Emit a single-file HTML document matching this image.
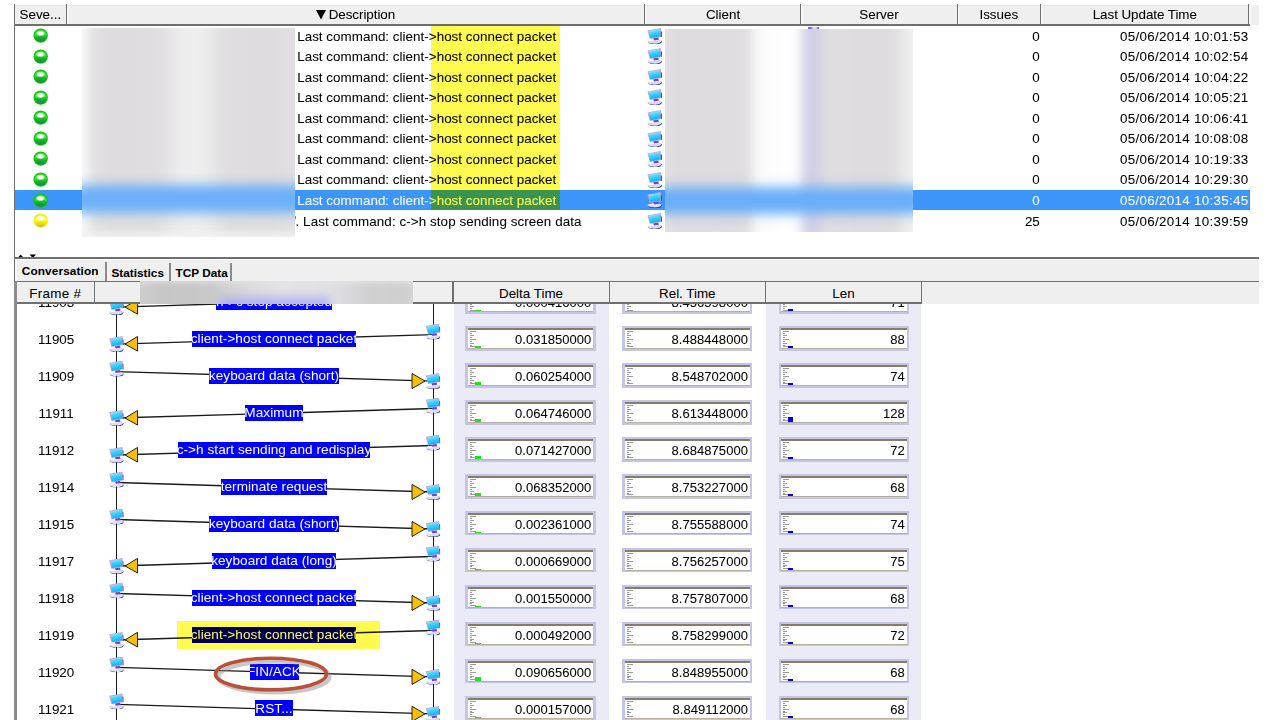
<!DOCTYPE html><html><head><meta charset="utf-8"><style>
html,body{margin:0;padding:0;background:#fff;width:1267px;height:720px;overflow:hidden;position:relative;font-family:"Liberation Sans", sans-serif;}
.a{position:absolute}
.t{position:absolute;white-space:nowrap;line-height:1;font-family:"Liberation Sans", sans-serif;-webkit-text-stroke:0.05px currentColor}
</style></head><body>
<svg width="0" height="0" style="position:absolute">
<defs>
<linearGradient id="gball" x1="0" y1="0" x2="0" y2="1">
<stop offset="0" stop-color="#40d040"/><stop offset="0.4" stop-color="#40d840"/><stop offset="0.62" stop-color="#10b820"/><stop offset="0.85" stop-color="#1c9048"/><stop offset="1" stop-color="#2a7a70"/></linearGradient>
<linearGradient id="yball" x1="0" y1="0" x2="0" y2="1">
<stop offset="0" stop-color="#f0f040"/><stop offset="0.4" stop-color="#ffff40"/><stop offset="0.62" stop-color="#f4ec00"/><stop offset="0.85" stop-color="#e0c830"/><stop offset="1" stop-color="#c09860"/></linearGradient>
<radialGradient id="hl" cx="0.5" cy="0.5" r="0.5">
<stop offset="0" stop-color="#ffffff" stop-opacity="1"/><stop offset="0.55" stop-color="#ffffff" stop-opacity="0.9"/><stop offset="1" stop-color="#ffffff" stop-opacity="0"/></radialGradient>
<linearGradient id="scr" x1="0" y1="0" x2="0.3" y2="1">
<stop offset="0" stop-color="#b8f8ff"/><stop offset="0.45" stop-color="#48d4fc"/><stop offset="1" stop-color="#10b0f8"/></linearGradient>
<symbol id="pc" viewBox="0 0 15 16">
<path d="M0.3,13.2 C1.5,11.2 13,10.6 14.8,12.9 C14.8,15.3 3.5,16.4 0.3,13.2 Z" fill="#dcdaf2"/>
<path d="M1.2,12.8 C3,11.8 9,11.6 11,12.2 C8,13 4,13.4 1.2,12.8 Z" fill="#ffffff"/>
<path d="M0.6,14 C3,15.6 8,15.9 10,15.6 C12.5,15.2 14.2,14.4 14.8,12.6 L15,13.8 C14.4,15.6 11.5,16.2 8.5,16.2 C5,16.2 2,15.6 0.6,14 Z" fill="#30309c"/>
<polygon points="6.2,10.2 11.2,9.3 11.8,11.8 7,12.4" fill="#6848c8"/>
<polygon points="0.5,2.4 13.8,0.1 14.6,8.9 2.8,11" fill="#c8a2d6"/>
<polygon points="13.7,3.2 15,3.8 15,8.9 14.2,9" fill="#5c4878"/>
<polygon points="1.4,3.1 13.1,1.1 13.8,8.3 3.3,10.2" fill="url(#scr)"/>
</symbol>
</defs></svg>

<div class="a" style="left:14.5px;top:4.5px;width:1235px;height:19px;background:#efefef;border-top:1px solid #e4e4e4"></div>
<div class="a" style="left:14.5px;top:24.0px;width:1235.5px;height:1.6px;background:#6f6f6f"></div>
<div class="a" style="left:65.5px;top:4.2px;width:1.4px;height:21px;background:#6f6f6f"></div>
<div class="a" style="left:67.0px;top:5.5px;width:1px;height:18px;background:#fbfbfb"></div>
<div class="a" style="left:643.9px;top:4.2px;width:1.4px;height:21px;background:#6f6f6f"></div>
<div class="a" style="left:645.4px;top:5.5px;width:1px;height:18px;background:#fbfbfb"></div>
<div class="a" style="left:800.0999999999999px;top:4.2px;width:1.4px;height:21px;background:#6f6f6f"></div>
<div class="a" style="left:801.5999999999999px;top:5.5px;width:1px;height:18px;background:#fbfbfb"></div>
<div class="a" style="left:956.5px;top:4.2px;width:1.4px;height:21px;background:#6f6f6f"></div>
<div class="a" style="left:958.0px;top:5.5px;width:1px;height:18px;background:#fbfbfb"></div>
<div class="a" style="left:1039.8999999999999px;top:4.2px;width:1.4px;height:21px;background:#6f6f6f"></div>
<div class="a" style="left:1041.3999999999999px;top:5.5px;width:1px;height:18px;background:#fbfbfb"></div>
<div class="a" style="left:1248.1px;top:4.2px;width:1.4px;height:21px;background:#6f6f6f"></div>
<div class="a" style="left:1249.6px;top:5.5px;width:1px;height:18px;background:#fbfbfb"></div>
<div class="a" style="left:1251.3px;top:4.5px;width:7.5px;height:20.5px;background:#efefef"></div>
<div class="a" style="left:13.8px;top:4.2px;width:1.4px;height:254px;background:#6f6f6f"></div>
<div class="t" style="left:19.5px;top:8.17px;font-size:13.4px;color:#000;">Seve...</div>
<svg class="a" style="left:316px;top:10px" width="10" height="10"><polygon points="0,0 10,0 5,9.5" fill="#000"/></svg>
<div class="t" style="left:328.7px;top:8.17px;font-size:13.4px;color:#000;letter-spacing:-0.05px">Description</div>
<div class="t" style="left:523px;width:400px;top:8.17px;font-size:13.4px;color:#000;text-align:center;">Client</div>
<div class="t" style="left:679px;width:400px;top:8.17px;font-size:13.4px;color:#000;text-align:center;">Server</div>
<div class="t" style="left:798.8px;width:400px;top:8.17px;font-size:13.4px;color:#000;text-align:center;">Issues</div>
<div class="t" style="left:944.8px;width:400px;top:8.17px;font-size:13.4px;color:#000;text-align:center;letter-spacing:-0.05px">Last Update Time</div>
<div class="a" style="left:15.2px;top:189.9px;width:1234.8px;height:20.2px;background:#3c96fa"></div>
<svg class="a" style="left:33.4px;top:28.10px" width="15.4" height="15.2" viewBox="0 0 16 16"><circle cx="8" cy="8" r="7.6" fill="#00cc00"/><ellipse cx="8" cy="8.2" rx="6.6" ry="6.4" fill="url(#gball)"/><ellipse cx="7.8" cy="5.6" rx="5" ry="3.2" fill="url(#hl)"/></svg>
<div class="t" style="left:297.2px;top:29.57px;font-size:13.4px;color:#000;letter-spacing:0.03px">Last command: client-&gt;host connect packet</div>
<svg class="a" style="left:646.9px;top:27.70px" width="15" height="16"><use href="#pc"/></svg>
<div class="t" style="right:227.20000000000005px;top:29.57px;font-size:13.4px;color:#000;text-align:right;">0</div>
<div class="t" style="right:18.40000000000009px;top:29.57px;font-size:13.4px;color:#000;text-align:right;letter-spacing:0.3px">05/06/2014 10:01:53</div>
<svg class="a" style="left:33.4px;top:48.66px" width="15.4" height="15.2" viewBox="0 0 16 16"><circle cx="8" cy="8" r="7.6" fill="#00cc00"/><ellipse cx="8" cy="8.2" rx="6.6" ry="6.4" fill="url(#gball)"/><ellipse cx="7.8" cy="5.6" rx="5" ry="3.2" fill="url(#hl)"/></svg>
<div class="t" style="left:297.2px;top:50.13px;font-size:13.4px;color:#000;letter-spacing:0.03px">Last command: client-&gt;host connect packet</div>
<svg class="a" style="left:646.9px;top:48.26px" width="15" height="16"><use href="#pc"/></svg>
<div class="t" style="right:227.20000000000005px;top:50.13px;font-size:13.4px;color:#000;text-align:right;">0</div>
<div class="t" style="right:18.40000000000009px;top:50.13px;font-size:13.4px;color:#000;text-align:right;letter-spacing:0.3px">05/06/2014 10:02:54</div>
<svg class="a" style="left:33.4px;top:69.22px" width="15.4" height="15.2" viewBox="0 0 16 16"><circle cx="8" cy="8" r="7.6" fill="#00cc00"/><ellipse cx="8" cy="8.2" rx="6.6" ry="6.4" fill="url(#gball)"/><ellipse cx="7.8" cy="5.6" rx="5" ry="3.2" fill="url(#hl)"/></svg>
<div class="t" style="left:297.2px;top:70.69px;font-size:13.4px;color:#000;letter-spacing:0.03px">Last command: client-&gt;host connect packet</div>
<svg class="a" style="left:646.9px;top:68.82px" width="15" height="16"><use href="#pc"/></svg>
<div class="t" style="right:227.20000000000005px;top:70.69px;font-size:13.4px;color:#000;text-align:right;">0</div>
<div class="t" style="right:18.40000000000009px;top:70.69px;font-size:13.4px;color:#000;text-align:right;letter-spacing:0.3px">05/06/2014 10:04:22</div>
<svg class="a" style="left:33.4px;top:89.78px" width="15.4" height="15.2" viewBox="0 0 16 16"><circle cx="8" cy="8" r="7.6" fill="#00cc00"/><ellipse cx="8" cy="8.2" rx="6.6" ry="6.4" fill="url(#gball)"/><ellipse cx="7.8" cy="5.6" rx="5" ry="3.2" fill="url(#hl)"/></svg>
<div class="t" style="left:297.2px;top:91.25px;font-size:13.4px;color:#000;letter-spacing:0.03px">Last command: client-&gt;host connect packet</div>
<svg class="a" style="left:646.9px;top:89.38px" width="15" height="16"><use href="#pc"/></svg>
<div class="t" style="right:227.20000000000005px;top:91.25px;font-size:13.4px;color:#000;text-align:right;">0</div>
<div class="t" style="right:18.40000000000009px;top:91.25px;font-size:13.4px;color:#000;text-align:right;letter-spacing:0.3px">05/06/2014 10:05:21</div>
<svg class="a" style="left:33.4px;top:110.34px" width="15.4" height="15.2" viewBox="0 0 16 16"><circle cx="8" cy="8" r="7.6" fill="#00cc00"/><ellipse cx="8" cy="8.2" rx="6.6" ry="6.4" fill="url(#gball)"/><ellipse cx="7.8" cy="5.6" rx="5" ry="3.2" fill="url(#hl)"/></svg>
<div class="t" style="left:297.2px;top:111.81px;font-size:13.4px;color:#000;letter-spacing:0.03px">Last command: client-&gt;host connect packet</div>
<svg class="a" style="left:646.9px;top:109.94px" width="15" height="16"><use href="#pc"/></svg>
<div class="t" style="right:227.20000000000005px;top:111.81px;font-size:13.4px;color:#000;text-align:right;">0</div>
<div class="t" style="right:18.40000000000009px;top:111.81px;font-size:13.4px;color:#000;text-align:right;letter-spacing:0.3px">05/06/2014 10:06:41</div>
<svg class="a" style="left:33.4px;top:130.90px" width="15.4" height="15.2" viewBox="0 0 16 16"><circle cx="8" cy="8" r="7.6" fill="#00cc00"/><ellipse cx="8" cy="8.2" rx="6.6" ry="6.4" fill="url(#gball)"/><ellipse cx="7.8" cy="5.6" rx="5" ry="3.2" fill="url(#hl)"/></svg>
<div class="t" style="left:297.2px;top:132.37px;font-size:13.4px;color:#000;letter-spacing:0.03px">Last command: client-&gt;host connect packet</div>
<svg class="a" style="left:646.9px;top:130.50px" width="15" height="16"><use href="#pc"/></svg>
<div class="t" style="right:227.20000000000005px;top:132.37px;font-size:13.4px;color:#000;text-align:right;">0</div>
<div class="t" style="right:18.40000000000009px;top:132.37px;font-size:13.4px;color:#000;text-align:right;letter-spacing:0.3px">05/06/2014 10:08:08</div>
<svg class="a" style="left:33.4px;top:151.46px" width="15.4" height="15.2" viewBox="0 0 16 16"><circle cx="8" cy="8" r="7.6" fill="#00cc00"/><ellipse cx="8" cy="8.2" rx="6.6" ry="6.4" fill="url(#gball)"/><ellipse cx="7.8" cy="5.6" rx="5" ry="3.2" fill="url(#hl)"/></svg>
<div class="t" style="left:297.2px;top:152.93px;font-size:13.4px;color:#000;letter-spacing:0.03px">Last command: client-&gt;host connect packet</div>
<svg class="a" style="left:646.9px;top:151.06px" width="15" height="16"><use href="#pc"/></svg>
<div class="t" style="right:227.20000000000005px;top:152.93px;font-size:13.4px;color:#000;text-align:right;">0</div>
<div class="t" style="right:18.40000000000009px;top:152.93px;font-size:13.4px;color:#000;text-align:right;letter-spacing:0.3px">05/06/2014 10:19:33</div>
<svg class="a" style="left:33.4px;top:172.02px" width="15.4" height="15.2" viewBox="0 0 16 16"><circle cx="8" cy="8" r="7.6" fill="#00cc00"/><ellipse cx="8" cy="8.2" rx="6.6" ry="6.4" fill="url(#gball)"/><ellipse cx="7.8" cy="5.6" rx="5" ry="3.2" fill="url(#hl)"/></svg>
<div class="t" style="left:297.2px;top:173.49px;font-size:13.4px;color:#000;letter-spacing:0.03px">Last command: client-&gt;host connect packet</div>
<svg class="a" style="left:646.9px;top:171.62px" width="15" height="16"><use href="#pc"/></svg>
<div class="t" style="right:227.20000000000005px;top:173.49px;font-size:13.4px;color:#000;text-align:right;">0</div>
<div class="t" style="right:18.40000000000009px;top:173.49px;font-size:13.4px;color:#000;text-align:right;letter-spacing:0.3px">05/06/2014 10:29:30</div>
<svg class="a" style="left:33.4px;top:192.58px" width="15.4" height="15.2" viewBox="0 0 16 16"><circle cx="8" cy="8" r="7.6" fill="#00cc00"/><ellipse cx="8" cy="8.2" rx="6.6" ry="6.4" fill="url(#gball)"/><ellipse cx="7.8" cy="5.6" rx="5" ry="3.2" fill="url(#hl)"/></svg>
<div class="t" style="left:297.2px;top:194.05px;font-size:13.4px;color:#fff;letter-spacing:0.03px">Last command: client-&gt;host connect packet</div>
<svg class="a" style="left:646.9px;top:192.18px" width="15" height="16"><use href="#pc"/></svg>
<div class="t" style="right:227.20000000000005px;top:194.05px;font-size:13.4px;color:#fff;text-align:right;">0</div>
<div class="t" style="right:18.40000000000009px;top:194.05px;font-size:13.4px;color:#fff;text-align:right;letter-spacing:0.3px">05/06/2014 10:35:45</div>
<svg class="a" style="left:33.4px;top:213.14px" width="15.4" height="15.2" viewBox="0 0 16 16"><circle cx="8" cy="8" r="7.6" fill="#f0f000"/><ellipse cx="8" cy="8.2" rx="6.6" ry="6.4" fill="url(#yball)"/><ellipse cx="7.8" cy="5.6" rx="5" ry="3.2" fill="url(#hl)"/></svg>
<div class="t" style="left:295.5px;top:214.61px;font-size:13.4px;color:#000;letter-spacing:0.08px">. Last command: c-&gt;h stop sending screen data</div>
<svg class="a" style="left:646.9px;top:212.74px" width="15" height="16"><use href="#pc"/></svg>
<div class="t" style="right:227.20000000000005px;top:214.61px;font-size:13.4px;color:#000;text-align:right;">25</div>
<div class="t" style="right:18.40000000000009px;top:214.61px;font-size:13.4px;color:#000;text-align:right;letter-spacing:0.3px">05/06/2014 10:39:59</div>
<div class="a" style="left:430.7px;top:25px;width:128.9px;height:185px;background:rgb(255,250,80);mix-blend-mode:multiply"></div>
<div class="a" style="left:81.7px;top:28px;width:213px;height:209px;overflow:hidden;background:#fff">
<div class="a" style="left:-10px;top:-10px;width:233px;height:229px;filter:blur(4px);background:
linear-gradient(90deg,#ffffff 0px,#fafafa 10px,#e2e0e2 22px,#dedcde 40px,#dfdddf 85px,#eeedee 110px,#eeeeee 130px,#dfdddf 155px,#dedcde 200px,#e2e0e2 233px)"></div>
<div class="a" style="left:-10px;top:157px;width:233px;height:28px;filter:blur(6px);background:#6ab0f8"></div>
<div class="a" style="left:-10px;top:204px;width:233px;height:30px;filter:blur(4px);background:#f2f2f2"></div>
</div>
<div class="a" style="left:665px;top:29px;width:248px;height:202.5px;overflow:hidden;background:#fff">
<div class="a" style="left:-10px;top:-10px;width:268px;height:222px;filter:blur(4px);background:
linear-gradient(90deg,#e6e4e6 0px,#dedcde 18px,#dfdddf 92px,#fbfbfb 103px,#ffffff 140px,#cfcde4 153px,#d0cee4 159px,#dfdddf 172px,#dedcde 238px,#eeeeee 254px,#f6f6f6 268px)"></div>
<div class="a" style="left:-10px;top:158px;width:268px;height:27px;filter:blur(6px);background:#68aef8"></div>

</div>
<div class="a" style="left:807.5px;top:27.4px;width:11px;height:1.6px;background:linear-gradient(90deg,#6a6ae0 0px,#7a6ad0 3px,#d8d0f8 5px,#e0d8ff 8px,#7070e0 10px)"></div>
<div class="a" style="left:295.2px;top:216.2px;width:1.2px;height:2.6px;background:#6c86c8"></div>
<svg class="a" style="left:17px;top:254px" width="20" height="4"><polygon points="0.5,4 3.7,0.6 6.9,4" fill="#000"/><polygon points="12.6,0.6 19,0.6 15.8,4" fill="#000"/></svg>
<div class="a" style="left:14.5px;top:257.4px;width:1244.5px;height:1.8px;background:#6f6f6f"></div>
<div class="a" style="left:14.5px;top:259.1px;width:1244.5px;height:22.2px;background:#efefef"></div>
<div class="a" style="left:105.4px;top:262px;width:1.3px;height:19px;background:#8a8a8a"></div>
<div class="a" style="left:169.4px;top:263px;width:1.3px;height:18px;background:#8a8a8a"></div>
<div class="a" style="left:230.4px;top:263px;width:1.3px;height:18px;background:#8a8a8a"></div>
<div class="t" style="left:21.8px;top:265.72px;font-size:11.8px;color:#000;font-weight:bold;letter-spacing:0.12px">Conversation</div>
<div class="t" style="left:111.5px;top:267.62px;font-size:11.8px;color:#000;font-weight:bold">Statistics</div>
<div class="t" style="left:175.5px;top:267.62px;font-size:11.8px;color:#000;font-weight:bold">TCP Data</div>
<div class="a" style="left:14.5px;top:280.6px;width:1244.5px;height:1.6px;background:#6f6f6f"></div>
<div class="a" style="left:16.5px;top:282.1px;width:1242.5px;height:21.6px;background:#efefef"></div>
<div class="a" style="left:16.5px;top:302.2px;width:905px;height:1.4px;background:#6f6f6f"></div>
<div class="a" style="left:15.900000000000002px;top:281.5px;width:1.4px;height:22px;background:#6f6f6f"></div>
<div class="a" style="left:93.8px;top:281.5px;width:1.4px;height:22px;background:#6f6f6f"></div>
<div class="a" style="left:452.2px;top:281.5px;width:1.4px;height:22px;background:#6f6f6f"></div>
<div class="a" style="left:608.5px;top:281.5px;width:1.4px;height:22px;background:#6f6f6f"></div>
<div class="a" style="left:764.6999999999999px;top:281.5px;width:1.4px;height:22px;background:#6f6f6f"></div>
<div class="a" style="left:920.8px;top:281.5px;width:1.4px;height:22px;background:#6f6f6f"></div>
<div class="t" style="left:-144.8px;width:400px;top:286.67px;font-size:13.4px;color:#000;text-align:center;letter-spacing:0.3px">Frame #</div>
<div class="t" style="left:331px;width:400px;top:286.67px;font-size:13.4px;color:#000;text-align:center;">Delta Time</div>
<div class="t" style="left:487.29999999999995px;width:400px;top:286.67px;font-size:13.4px;color:#000;text-align:center;">Rel. Time</div>
<div class="t" style="left:643.5px;width:400px;top:286.67px;font-size:13.4px;color:#000;text-align:center;">Len</div>
<div class="a" style="left:14.2px;top:281px;width:3.2px;height:439px;background:#8c8c8c"></div>
<div class="a" style="left:13.8px;top:258px;width:1.4px;height:23px;background:#6f6f6f"></div>
<div class="a" style="left:15.4px;top:259.5px;width:1.2px;height:21.5px;background:#fbfbfb"></div>
<div class="a" style="left:15.4px;top:259.3px;width:1243px;height:1.2px;background:#fbfbfb"></div>
<div class="a" style="left:454.2px;top:303.6px;width:154.6px;height:416.4px;background:#ebebf7"></div>
<div class="a" style="left:766.2px;top:303.6px;width:154.6px;height:416.4px;background:#ebebf7"></div>
<div class="a" style="left:0;top:303.6px;width:1267px;height:416.4px;overflow:hidden">
<div class="a" style="left:116.0px;top:0.00px;width:1.3px;height:420px;background:#1a1a1a"></div>
<div class="a" style="left:432.6px;top:0.00px;width:1.3px;height:420px;background:#1a1a1a"></div>
<div class="t" style="left:-143.9px;width:400px;text-align:center;top:-7.71px;font-size:13.4px;color:#000;letter-spacing:0.0px">11903</div>
<div class="a" style="left:465.4px;top:-14.78px;width:130.4px;height:24.8px;background:#c4c4e4"></div>
<div class="a" style="left:468.0px;top:-12.48px;width:125.2px;height:20.3px;background:#ffffff"></div>
<div class="a" style="left:468.0px;top:-12.48px;width:125.2px;height:2.0px;background:#857d68"></div>
<div class="a" style="left:468.0px;top:7.32px;width:125.2px;height:0.8px;background:#b8b0a0"></div>
<div class="a" style="left:469.9px;top:-9.28px;width:6px;height:0.6px;background:#9a9a9a"></div>
<div class="a" style="left:469.9px;top:-7.38px;width:2px;height:0.6px;background:#9a9a9a"></div>
<div class="a" style="left:469.9px;top:-5.48px;width:4px;height:0.6px;background:#9a9a9a"></div>
<div class="a" style="left:469.9px;top:-3.58px;width:2px;height:0.6px;background:#9a9a9a"></div>
<div class="a" style="left:469.9px;top:-1.68px;width:6px;height:0.6px;background:#9a9a9a"></div>
<div class="a" style="left:469.9px;top:0.22px;width:2px;height:0.6px;background:#9a9a9a"></div>
<div class="a" style="left:469.9px;top:2.12px;width:4px;height:0.6px;background:#9a9a9a"></div>
<div class="a" style="left:469.9px;top:4.02px;width:2px;height:0.6px;background:#9a9a9a"></div>
<div class="a" style="left:469.9px;top:5.92px;width:6px;height:0.6px;background:#9a9a9a"></div>
<div class="a" style="left:475.2px;top:6.41px;width:5.6px;height:1.01248px;background:#20e020"></div>
<div class="t" style="right:675.6px;top:-7.75px;font-size:13px;color:#000;letter-spacing:0.05px">0.000416000</div>
<div class="a" style="left:622px;top:-14.78px;width:130.4px;height:24.8px;background:#c4c4e4"></div>
<div class="a" style="left:624.6px;top:-12.48px;width:125.2px;height:20.3px;background:#ffffff"></div>
<div class="a" style="left:624.6px;top:-12.48px;width:125.2px;height:2.0px;background:#857d68"></div>
<div class="a" style="left:624.6px;top:7.32px;width:125.2px;height:0.8px;background:#b8b0a0"></div>
<div class="a" style="left:626.5px;top:-9.28px;width:6px;height:0.6px;background:#9a9a9a"></div>
<div class="a" style="left:626.5px;top:-7.38px;width:2px;height:0.6px;background:#9a9a9a"></div>
<div class="a" style="left:626.5px;top:-5.48px;width:4px;height:0.6px;background:#9a9a9a"></div>
<div class="a" style="left:626.5px;top:-3.58px;width:2px;height:0.6px;background:#9a9a9a"></div>
<div class="a" style="left:626.5px;top:-1.68px;width:6px;height:0.6px;background:#9a9a9a"></div>
<div class="a" style="left:626.5px;top:0.22px;width:2px;height:0.6px;background:#9a9a9a"></div>
<div class="a" style="left:626.5px;top:2.12px;width:4px;height:0.6px;background:#9a9a9a"></div>
<div class="a" style="left:626.5px;top:4.02px;width:2px;height:0.6px;background:#9a9a9a"></div>
<div class="a" style="left:626.5px;top:5.92px;width:6px;height:0.6px;background:#9a9a9a"></div>
<div class="t" style="right:519px;top:-7.75px;font-size:13px;color:#000;letter-spacing:0.05px">8.456598000</div>
<div class="a" style="left:778.8px;top:-14.78px;width:130.4px;height:24.8px;background:#c4c4e4"></div>
<div class="a" style="left:781.4px;top:-12.48px;width:125.2px;height:20.3px;background:#ffffff"></div>
<div class="a" style="left:781.4px;top:-12.48px;width:125.2px;height:2.0px;background:#857d68"></div>
<div class="a" style="left:781.4px;top:7.32px;width:125.2px;height:0.8px;background:#b8b0a0"></div>
<div class="a" style="left:783.3px;top:-9.28px;width:6px;height:0.6px;background:#9a9a9a"></div>
<div class="a" style="left:783.3px;top:-7.38px;width:2px;height:0.6px;background:#9a9a9a"></div>
<div class="a" style="left:783.3px;top:-5.48px;width:4px;height:0.6px;background:#9a9a9a"></div>
<div class="a" style="left:783.3px;top:-3.58px;width:2px;height:0.6px;background:#9a9a9a"></div>
<div class="a" style="left:783.3px;top:-1.68px;width:6px;height:0.6px;background:#9a9a9a"></div>
<div class="a" style="left:783.3px;top:0.22px;width:2px;height:0.6px;background:#9a9a9a"></div>
<div class="a" style="left:783.3px;top:2.12px;width:4px;height:0.6px;background:#9a9a9a"></div>
<div class="a" style="left:783.3px;top:4.02px;width:2px;height:0.6px;background:#9a9a9a"></div>
<div class="a" style="left:783.3px;top:5.92px;width:6px;height:0.6px;background:#9a9a9a"></div>
<div class="a" style="left:788.0999999999999px;top:5.42px;width:5.2px;height:2.1px;background:#0000f0"></div>
<div class="t" style="right:362.20000000000005px;top:-7.75px;font-size:13px;color:#000;letter-spacing:0.05px">71</div>
<div class="t" style="left:-143.9px;width:400px;text-align:center;top:29.27px;font-size:13.4px;color:#000;letter-spacing:0.0px">11905</div>
<div class="a" style="left:465.4px;top:22.20px;width:130.4px;height:24.8px;background:#c4c4e4"></div>
<div class="a" style="left:468.0px;top:24.50px;width:125.2px;height:20.3px;background:#ffffff"></div>
<div class="a" style="left:468.0px;top:24.50px;width:125.2px;height:2.0px;background:#857d68"></div>
<div class="a" style="left:468.0px;top:44.30px;width:125.2px;height:0.8px;background:#b8b0a0"></div>
<div class="a" style="left:469.9px;top:27.70px;width:6px;height:0.6px;background:#9a9a9a"></div>
<div class="a" style="left:469.9px;top:29.60px;width:2px;height:0.6px;background:#9a9a9a"></div>
<div class="a" style="left:469.9px;top:31.50px;width:4px;height:0.6px;background:#9a9a9a"></div>
<div class="a" style="left:469.9px;top:33.40px;width:2px;height:0.6px;background:#9a9a9a"></div>
<div class="a" style="left:469.9px;top:35.30px;width:6px;height:0.6px;background:#9a9a9a"></div>
<div class="a" style="left:469.9px;top:37.20px;width:2px;height:0.6px;background:#9a9a9a"></div>
<div class="a" style="left:469.9px;top:39.10px;width:4px;height:0.6px;background:#9a9a9a"></div>
<div class="a" style="left:469.9px;top:41.00px;width:2px;height:0.6px;background:#9a9a9a"></div>
<div class="a" style="left:469.9px;top:42.90px;width:6px;height:0.6px;background:#9a9a9a"></div>
<div class="a" style="left:475.2px;top:42.44px;width:5.6px;height:1.9555000000000002px;background:#20e020"></div>
<div class="t" style="right:675.6px;top:29.24px;font-size:13px;color:#000;letter-spacing:0.05px">0.031850000</div>
<div class="a" style="left:622px;top:22.20px;width:130.4px;height:24.8px;background:#c4c4e4"></div>
<div class="a" style="left:624.6px;top:24.50px;width:125.2px;height:20.3px;background:#ffffff"></div>
<div class="a" style="left:624.6px;top:24.50px;width:125.2px;height:2.0px;background:#857d68"></div>
<div class="a" style="left:624.6px;top:44.30px;width:125.2px;height:0.8px;background:#b8b0a0"></div>
<div class="a" style="left:626.5px;top:27.70px;width:6px;height:0.6px;background:#9a9a9a"></div>
<div class="a" style="left:626.5px;top:29.60px;width:2px;height:0.6px;background:#9a9a9a"></div>
<div class="a" style="left:626.5px;top:31.50px;width:4px;height:0.6px;background:#9a9a9a"></div>
<div class="a" style="left:626.5px;top:33.40px;width:2px;height:0.6px;background:#9a9a9a"></div>
<div class="a" style="left:626.5px;top:35.30px;width:6px;height:0.6px;background:#9a9a9a"></div>
<div class="a" style="left:626.5px;top:37.20px;width:2px;height:0.6px;background:#9a9a9a"></div>
<div class="a" style="left:626.5px;top:39.10px;width:4px;height:0.6px;background:#9a9a9a"></div>
<div class="a" style="left:626.5px;top:41.00px;width:2px;height:0.6px;background:#9a9a9a"></div>
<div class="a" style="left:626.5px;top:42.90px;width:6px;height:0.6px;background:#9a9a9a"></div>
<div class="t" style="right:519px;top:29.24px;font-size:13px;color:#000;letter-spacing:0.05px">8.488448000</div>
<div class="a" style="left:778.8px;top:22.20px;width:130.4px;height:24.8px;background:#c4c4e4"></div>
<div class="a" style="left:781.4px;top:24.50px;width:125.2px;height:20.3px;background:#ffffff"></div>
<div class="a" style="left:781.4px;top:24.50px;width:125.2px;height:2.0px;background:#857d68"></div>
<div class="a" style="left:781.4px;top:44.30px;width:125.2px;height:0.8px;background:#b8b0a0"></div>
<div class="a" style="left:783.3px;top:27.70px;width:6px;height:0.6px;background:#9a9a9a"></div>
<div class="a" style="left:783.3px;top:29.60px;width:2px;height:0.6px;background:#9a9a9a"></div>
<div class="a" style="left:783.3px;top:31.50px;width:4px;height:0.6px;background:#9a9a9a"></div>
<div class="a" style="left:783.3px;top:33.40px;width:2px;height:0.6px;background:#9a9a9a"></div>
<div class="a" style="left:783.3px;top:35.30px;width:6px;height:0.6px;background:#9a9a9a"></div>
<div class="a" style="left:783.3px;top:37.20px;width:2px;height:0.6px;background:#9a9a9a"></div>
<div class="a" style="left:783.3px;top:39.10px;width:4px;height:0.6px;background:#9a9a9a"></div>
<div class="a" style="left:783.3px;top:41.00px;width:2px;height:0.6px;background:#9a9a9a"></div>
<div class="a" style="left:783.3px;top:42.90px;width:6px;height:0.6px;background:#9a9a9a"></div>
<div class="a" style="left:788.0999999999999px;top:42.40px;width:5.2px;height:2.1px;background:#0000f0"></div>
<div class="t" style="right:362.20000000000005px;top:29.24px;font-size:13px;color:#000;letter-spacing:0.05px">88</div>
<div class="t" style="left:-143.9px;width:400px;text-align:center;top:66.25px;font-size:13.4px;color:#000;letter-spacing:0.0px">11909</div>
<div class="a" style="left:465.4px;top:59.18px;width:130.4px;height:24.8px;background:#c4c4e4"></div>
<div class="a" style="left:468.0px;top:61.48px;width:125.2px;height:20.3px;background:#ffffff"></div>
<div class="a" style="left:468.0px;top:61.48px;width:125.2px;height:2.0px;background:#857d68"></div>
<div class="a" style="left:468.0px;top:81.28px;width:125.2px;height:0.8px;background:#b8b0a0"></div>
<div class="a" style="left:469.9px;top:64.68px;width:6px;height:0.6px;background:#9a9a9a"></div>
<div class="a" style="left:469.9px;top:66.58px;width:2px;height:0.6px;background:#9a9a9a"></div>
<div class="a" style="left:469.9px;top:68.48px;width:4px;height:0.6px;background:#9a9a9a"></div>
<div class="a" style="left:469.9px;top:70.38px;width:2px;height:0.6px;background:#9a9a9a"></div>
<div class="a" style="left:469.9px;top:72.28px;width:6px;height:0.6px;background:#9a9a9a"></div>
<div class="a" style="left:469.9px;top:74.18px;width:2px;height:0.6px;background:#9a9a9a"></div>
<div class="a" style="left:469.9px;top:76.08px;width:4px;height:0.6px;background:#9a9a9a"></div>
<div class="a" style="left:469.9px;top:77.98px;width:2px;height:0.6px;background:#9a9a9a"></div>
<div class="a" style="left:469.9px;top:79.88px;width:6px;height:0.6px;background:#9a9a9a"></div>
<div class="a" style="left:475.2px;top:78.57px;width:5.6px;height:2.80762px;background:#20e020"></div>
<div class="t" style="right:675.6px;top:66.22px;font-size:13px;color:#000;letter-spacing:0.05px">0.060254000</div>
<div class="a" style="left:622px;top:59.18px;width:130.4px;height:24.8px;background:#c4c4e4"></div>
<div class="a" style="left:624.6px;top:61.48px;width:125.2px;height:20.3px;background:#ffffff"></div>
<div class="a" style="left:624.6px;top:61.48px;width:125.2px;height:2.0px;background:#857d68"></div>
<div class="a" style="left:624.6px;top:81.28px;width:125.2px;height:0.8px;background:#b8b0a0"></div>
<div class="a" style="left:626.5px;top:64.68px;width:6px;height:0.6px;background:#9a9a9a"></div>
<div class="a" style="left:626.5px;top:66.58px;width:2px;height:0.6px;background:#9a9a9a"></div>
<div class="a" style="left:626.5px;top:68.48px;width:4px;height:0.6px;background:#9a9a9a"></div>
<div class="a" style="left:626.5px;top:70.38px;width:2px;height:0.6px;background:#9a9a9a"></div>
<div class="a" style="left:626.5px;top:72.28px;width:6px;height:0.6px;background:#9a9a9a"></div>
<div class="a" style="left:626.5px;top:74.18px;width:2px;height:0.6px;background:#9a9a9a"></div>
<div class="a" style="left:626.5px;top:76.08px;width:4px;height:0.6px;background:#9a9a9a"></div>
<div class="a" style="left:626.5px;top:77.98px;width:2px;height:0.6px;background:#9a9a9a"></div>
<div class="a" style="left:626.5px;top:79.88px;width:6px;height:0.6px;background:#9a9a9a"></div>
<div class="t" style="right:519px;top:66.22px;font-size:13px;color:#000;letter-spacing:0.05px">8.548702000</div>
<div class="a" style="left:778.8px;top:59.18px;width:130.4px;height:24.8px;background:#c4c4e4"></div>
<div class="a" style="left:781.4px;top:61.48px;width:125.2px;height:20.3px;background:#ffffff"></div>
<div class="a" style="left:781.4px;top:61.48px;width:125.2px;height:2.0px;background:#857d68"></div>
<div class="a" style="left:781.4px;top:81.28px;width:125.2px;height:0.8px;background:#b8b0a0"></div>
<div class="a" style="left:783.3px;top:64.68px;width:6px;height:0.6px;background:#9a9a9a"></div>
<div class="a" style="left:783.3px;top:66.58px;width:2px;height:0.6px;background:#9a9a9a"></div>
<div class="a" style="left:783.3px;top:68.48px;width:4px;height:0.6px;background:#9a9a9a"></div>
<div class="a" style="left:783.3px;top:70.38px;width:2px;height:0.6px;background:#9a9a9a"></div>
<div class="a" style="left:783.3px;top:72.28px;width:6px;height:0.6px;background:#9a9a9a"></div>
<div class="a" style="left:783.3px;top:74.18px;width:2px;height:0.6px;background:#9a9a9a"></div>
<div class="a" style="left:783.3px;top:76.08px;width:4px;height:0.6px;background:#9a9a9a"></div>
<div class="a" style="left:783.3px;top:77.98px;width:2px;height:0.6px;background:#9a9a9a"></div>
<div class="a" style="left:783.3px;top:79.88px;width:6px;height:0.6px;background:#9a9a9a"></div>
<div class="a" style="left:788.0999999999999px;top:79.38px;width:5.2px;height:2.1px;background:#0000f0"></div>
<div class="t" style="right:362.20000000000005px;top:66.22px;font-size:13px;color:#000;letter-spacing:0.05px">74</div>
<div class="t" style="left:-143.9px;width:400px;text-align:center;top:103.23px;font-size:13.4px;color:#000;letter-spacing:0.0px">11911</div>
<div class="a" style="left:465.4px;top:96.16px;width:130.4px;height:24.8px;background:#c4c4e4"></div>
<div class="a" style="left:468.0px;top:98.46px;width:125.2px;height:20.3px;background:#ffffff"></div>
<div class="a" style="left:468.0px;top:98.46px;width:125.2px;height:2.0px;background:#857d68"></div>
<div class="a" style="left:468.0px;top:118.26px;width:125.2px;height:0.8px;background:#b8b0a0"></div>
<div class="a" style="left:469.9px;top:101.66px;width:6px;height:0.6px;background:#9a9a9a"></div>
<div class="a" style="left:469.9px;top:103.56px;width:2px;height:0.6px;background:#9a9a9a"></div>
<div class="a" style="left:469.9px;top:105.46px;width:4px;height:0.6px;background:#9a9a9a"></div>
<div class="a" style="left:469.9px;top:107.36px;width:2px;height:0.6px;background:#9a9a9a"></div>
<div class="a" style="left:469.9px;top:109.26px;width:6px;height:0.6px;background:#9a9a9a"></div>
<div class="a" style="left:469.9px;top:111.16px;width:2px;height:0.6px;background:#9a9a9a"></div>
<div class="a" style="left:469.9px;top:113.06px;width:4px;height:0.6px;background:#9a9a9a"></div>
<div class="a" style="left:469.9px;top:114.96px;width:2px;height:0.6px;background:#9a9a9a"></div>
<div class="a" style="left:469.9px;top:116.86px;width:6px;height:0.6px;background:#9a9a9a"></div>
<div class="a" style="left:475.2px;top:115.42px;width:5.6px;height:2.94238px;background:#20e020"></div>
<div class="t" style="right:675.6px;top:103.19px;font-size:13px;color:#000;letter-spacing:0.05px">0.064746000</div>
<div class="a" style="left:622px;top:96.16px;width:130.4px;height:24.8px;background:#c4c4e4"></div>
<div class="a" style="left:624.6px;top:98.46px;width:125.2px;height:20.3px;background:#ffffff"></div>
<div class="a" style="left:624.6px;top:98.46px;width:125.2px;height:2.0px;background:#857d68"></div>
<div class="a" style="left:624.6px;top:118.26px;width:125.2px;height:0.8px;background:#b8b0a0"></div>
<div class="a" style="left:626.5px;top:101.66px;width:6px;height:0.6px;background:#9a9a9a"></div>
<div class="a" style="left:626.5px;top:103.56px;width:2px;height:0.6px;background:#9a9a9a"></div>
<div class="a" style="left:626.5px;top:105.46px;width:4px;height:0.6px;background:#9a9a9a"></div>
<div class="a" style="left:626.5px;top:107.36px;width:2px;height:0.6px;background:#9a9a9a"></div>
<div class="a" style="left:626.5px;top:109.26px;width:6px;height:0.6px;background:#9a9a9a"></div>
<div class="a" style="left:626.5px;top:111.16px;width:2px;height:0.6px;background:#9a9a9a"></div>
<div class="a" style="left:626.5px;top:113.06px;width:4px;height:0.6px;background:#9a9a9a"></div>
<div class="a" style="left:626.5px;top:114.96px;width:2px;height:0.6px;background:#9a9a9a"></div>
<div class="a" style="left:626.5px;top:116.86px;width:6px;height:0.6px;background:#9a9a9a"></div>
<div class="t" style="right:519px;top:103.19px;font-size:13px;color:#000;letter-spacing:0.05px">8.613448000</div>
<div class="a" style="left:778.8px;top:96.16px;width:130.4px;height:24.8px;background:#c4c4e4"></div>
<div class="a" style="left:781.4px;top:98.46px;width:125.2px;height:20.3px;background:#ffffff"></div>
<div class="a" style="left:781.4px;top:98.46px;width:125.2px;height:2.0px;background:#857d68"></div>
<div class="a" style="left:781.4px;top:118.26px;width:125.2px;height:0.8px;background:#b8b0a0"></div>
<div class="a" style="left:783.3px;top:101.66px;width:6px;height:0.6px;background:#9a9a9a"></div>
<div class="a" style="left:783.3px;top:103.56px;width:2px;height:0.6px;background:#9a9a9a"></div>
<div class="a" style="left:783.3px;top:105.46px;width:4px;height:0.6px;background:#9a9a9a"></div>
<div class="a" style="left:783.3px;top:107.36px;width:2px;height:0.6px;background:#9a9a9a"></div>
<div class="a" style="left:783.3px;top:109.26px;width:6px;height:0.6px;background:#9a9a9a"></div>
<div class="a" style="left:783.3px;top:111.16px;width:2px;height:0.6px;background:#9a9a9a"></div>
<div class="a" style="left:783.3px;top:113.06px;width:4px;height:0.6px;background:#9a9a9a"></div>
<div class="a" style="left:783.3px;top:114.96px;width:2px;height:0.6px;background:#9a9a9a"></div>
<div class="a" style="left:783.3px;top:116.86px;width:6px;height:0.6px;background:#9a9a9a"></div>
<div class="a" style="left:788.0999999999999px;top:113.46px;width:5.2px;height:5px;background:#0000f0"></div>
<div class="t" style="right:362.20000000000005px;top:103.19px;font-size:13px;color:#000;letter-spacing:0.05px">128</div>
<div class="t" style="left:-143.9px;width:400px;text-align:center;top:140.21px;font-size:13.4px;color:#000;letter-spacing:0.0px">11912</div>
<div class="a" style="left:465.4px;top:133.14px;width:130.4px;height:24.8px;background:#c4c4e4"></div>
<div class="a" style="left:468.0px;top:135.44px;width:125.2px;height:20.3px;background:#ffffff"></div>
<div class="a" style="left:468.0px;top:135.44px;width:125.2px;height:2.0px;background:#857d68"></div>
<div class="a" style="left:468.0px;top:155.24px;width:125.2px;height:0.8px;background:#b8b0a0"></div>
<div class="a" style="left:469.9px;top:138.64px;width:6px;height:0.6px;background:#9a9a9a"></div>
<div class="a" style="left:469.9px;top:140.54px;width:2px;height:0.6px;background:#9a9a9a"></div>
<div class="a" style="left:469.9px;top:142.44px;width:4px;height:0.6px;background:#9a9a9a"></div>
<div class="a" style="left:469.9px;top:144.34px;width:2px;height:0.6px;background:#9a9a9a"></div>
<div class="a" style="left:469.9px;top:146.24px;width:6px;height:0.6px;background:#9a9a9a"></div>
<div class="a" style="left:469.9px;top:148.14px;width:2px;height:0.6px;background:#9a9a9a"></div>
<div class="a" style="left:469.9px;top:150.04px;width:4px;height:0.6px;background:#9a9a9a"></div>
<div class="a" style="left:469.9px;top:151.94px;width:2px;height:0.6px;background:#9a9a9a"></div>
<div class="a" style="left:469.9px;top:153.84px;width:6px;height:0.6px;background:#9a9a9a"></div>
<div class="a" style="left:475.2px;top:152.20px;width:5.6px;height:3.1428100000000003px;background:#20e020"></div>
<div class="t" style="right:675.6px;top:140.18px;font-size:13px;color:#000;letter-spacing:0.05px">0.071427000</div>
<div class="a" style="left:622px;top:133.14px;width:130.4px;height:24.8px;background:#c4c4e4"></div>
<div class="a" style="left:624.6px;top:135.44px;width:125.2px;height:20.3px;background:#ffffff"></div>
<div class="a" style="left:624.6px;top:135.44px;width:125.2px;height:2.0px;background:#857d68"></div>
<div class="a" style="left:624.6px;top:155.24px;width:125.2px;height:0.8px;background:#b8b0a0"></div>
<div class="a" style="left:626.5px;top:138.64px;width:6px;height:0.6px;background:#9a9a9a"></div>
<div class="a" style="left:626.5px;top:140.54px;width:2px;height:0.6px;background:#9a9a9a"></div>
<div class="a" style="left:626.5px;top:142.44px;width:4px;height:0.6px;background:#9a9a9a"></div>
<div class="a" style="left:626.5px;top:144.34px;width:2px;height:0.6px;background:#9a9a9a"></div>
<div class="a" style="left:626.5px;top:146.24px;width:6px;height:0.6px;background:#9a9a9a"></div>
<div class="a" style="left:626.5px;top:148.14px;width:2px;height:0.6px;background:#9a9a9a"></div>
<div class="a" style="left:626.5px;top:150.04px;width:4px;height:0.6px;background:#9a9a9a"></div>
<div class="a" style="left:626.5px;top:151.94px;width:2px;height:0.6px;background:#9a9a9a"></div>
<div class="a" style="left:626.5px;top:153.84px;width:6px;height:0.6px;background:#9a9a9a"></div>
<div class="t" style="right:519px;top:140.18px;font-size:13px;color:#000;letter-spacing:0.05px">8.684875000</div>
<div class="a" style="left:778.8px;top:133.14px;width:130.4px;height:24.8px;background:#c4c4e4"></div>
<div class="a" style="left:781.4px;top:135.44px;width:125.2px;height:20.3px;background:#ffffff"></div>
<div class="a" style="left:781.4px;top:135.44px;width:125.2px;height:2.0px;background:#857d68"></div>
<div class="a" style="left:781.4px;top:155.24px;width:125.2px;height:0.8px;background:#b8b0a0"></div>
<div class="a" style="left:783.3px;top:138.64px;width:6px;height:0.6px;background:#9a9a9a"></div>
<div class="a" style="left:783.3px;top:140.54px;width:2px;height:0.6px;background:#9a9a9a"></div>
<div class="a" style="left:783.3px;top:142.44px;width:4px;height:0.6px;background:#9a9a9a"></div>
<div class="a" style="left:783.3px;top:144.34px;width:2px;height:0.6px;background:#9a9a9a"></div>
<div class="a" style="left:783.3px;top:146.24px;width:6px;height:0.6px;background:#9a9a9a"></div>
<div class="a" style="left:783.3px;top:148.14px;width:2px;height:0.6px;background:#9a9a9a"></div>
<div class="a" style="left:783.3px;top:150.04px;width:4px;height:0.6px;background:#9a9a9a"></div>
<div class="a" style="left:783.3px;top:151.94px;width:2px;height:0.6px;background:#9a9a9a"></div>
<div class="a" style="left:783.3px;top:153.84px;width:6px;height:0.6px;background:#9a9a9a"></div>
<div class="a" style="left:788.0999999999999px;top:153.34px;width:5.2px;height:2.1px;background:#0000f0"></div>
<div class="t" style="right:362.20000000000005px;top:140.18px;font-size:13px;color:#000;letter-spacing:0.05px">72</div>
<div class="t" style="left:-143.9px;width:400px;text-align:center;top:177.19px;font-size:13.4px;color:#000;letter-spacing:0.0px">11914</div>
<div class="a" style="left:465.4px;top:170.12px;width:130.4px;height:24.8px;background:#c4c4e4"></div>
<div class="a" style="left:468.0px;top:172.42px;width:125.2px;height:20.3px;background:#ffffff"></div>
<div class="a" style="left:468.0px;top:172.42px;width:125.2px;height:2.0px;background:#857d68"></div>
<div class="a" style="left:468.0px;top:192.22px;width:125.2px;height:0.8px;background:#b8b0a0"></div>
<div class="a" style="left:469.9px;top:175.62px;width:6px;height:0.6px;background:#9a9a9a"></div>
<div class="a" style="left:469.9px;top:177.52px;width:2px;height:0.6px;background:#9a9a9a"></div>
<div class="a" style="left:469.9px;top:179.42px;width:4px;height:0.6px;background:#9a9a9a"></div>
<div class="a" style="left:469.9px;top:181.32px;width:2px;height:0.6px;background:#9a9a9a"></div>
<div class="a" style="left:469.9px;top:183.22px;width:6px;height:0.6px;background:#9a9a9a"></div>
<div class="a" style="left:469.9px;top:185.12px;width:2px;height:0.6px;background:#9a9a9a"></div>
<div class="a" style="left:469.9px;top:187.02px;width:4px;height:0.6px;background:#9a9a9a"></div>
<div class="a" style="left:469.9px;top:188.92px;width:2px;height:0.6px;background:#9a9a9a"></div>
<div class="a" style="left:469.9px;top:190.82px;width:6px;height:0.6px;background:#9a9a9a"></div>
<div class="a" style="left:475.2px;top:189.27px;width:5.6px;height:3.05056px;background:#20e020"></div>
<div class="t" style="right:675.6px;top:177.15px;font-size:13px;color:#000;letter-spacing:0.05px">0.068352000</div>
<div class="a" style="left:622px;top:170.12px;width:130.4px;height:24.8px;background:#c4c4e4"></div>
<div class="a" style="left:624.6px;top:172.42px;width:125.2px;height:20.3px;background:#ffffff"></div>
<div class="a" style="left:624.6px;top:172.42px;width:125.2px;height:2.0px;background:#857d68"></div>
<div class="a" style="left:624.6px;top:192.22px;width:125.2px;height:0.8px;background:#b8b0a0"></div>
<div class="a" style="left:626.5px;top:175.62px;width:6px;height:0.6px;background:#9a9a9a"></div>
<div class="a" style="left:626.5px;top:177.52px;width:2px;height:0.6px;background:#9a9a9a"></div>
<div class="a" style="left:626.5px;top:179.42px;width:4px;height:0.6px;background:#9a9a9a"></div>
<div class="a" style="left:626.5px;top:181.32px;width:2px;height:0.6px;background:#9a9a9a"></div>
<div class="a" style="left:626.5px;top:183.22px;width:6px;height:0.6px;background:#9a9a9a"></div>
<div class="a" style="left:626.5px;top:185.12px;width:2px;height:0.6px;background:#9a9a9a"></div>
<div class="a" style="left:626.5px;top:187.02px;width:4px;height:0.6px;background:#9a9a9a"></div>
<div class="a" style="left:626.5px;top:188.92px;width:2px;height:0.6px;background:#9a9a9a"></div>
<div class="a" style="left:626.5px;top:190.82px;width:6px;height:0.6px;background:#9a9a9a"></div>
<div class="t" style="right:519px;top:177.15px;font-size:13px;color:#000;letter-spacing:0.05px">8.753227000</div>
<div class="a" style="left:778.8px;top:170.12px;width:130.4px;height:24.8px;background:#c4c4e4"></div>
<div class="a" style="left:781.4px;top:172.42px;width:125.2px;height:20.3px;background:#ffffff"></div>
<div class="a" style="left:781.4px;top:172.42px;width:125.2px;height:2.0px;background:#857d68"></div>
<div class="a" style="left:781.4px;top:192.22px;width:125.2px;height:0.8px;background:#b8b0a0"></div>
<div class="a" style="left:783.3px;top:175.62px;width:6px;height:0.6px;background:#9a9a9a"></div>
<div class="a" style="left:783.3px;top:177.52px;width:2px;height:0.6px;background:#9a9a9a"></div>
<div class="a" style="left:783.3px;top:179.42px;width:4px;height:0.6px;background:#9a9a9a"></div>
<div class="a" style="left:783.3px;top:181.32px;width:2px;height:0.6px;background:#9a9a9a"></div>
<div class="a" style="left:783.3px;top:183.22px;width:6px;height:0.6px;background:#9a9a9a"></div>
<div class="a" style="left:783.3px;top:185.12px;width:2px;height:0.6px;background:#9a9a9a"></div>
<div class="a" style="left:783.3px;top:187.02px;width:4px;height:0.6px;background:#9a9a9a"></div>
<div class="a" style="left:783.3px;top:188.92px;width:2px;height:0.6px;background:#9a9a9a"></div>
<div class="a" style="left:783.3px;top:190.82px;width:6px;height:0.6px;background:#9a9a9a"></div>
<div class="a" style="left:788.0999999999999px;top:190.32px;width:5.2px;height:2.1px;background:#0000f0"></div>
<div class="t" style="right:362.20000000000005px;top:177.15px;font-size:13px;color:#000;letter-spacing:0.05px">68</div>
<div class="t" style="left:-143.9px;width:400px;text-align:center;top:214.17px;font-size:13.4px;color:#000;letter-spacing:0.0px">11915</div>
<div class="a" style="left:465.4px;top:207.10px;width:130.4px;height:24.8px;background:#c4c4e4"></div>
<div class="a" style="left:468.0px;top:209.40px;width:125.2px;height:20.3px;background:#ffffff"></div>
<div class="a" style="left:468.0px;top:209.40px;width:125.2px;height:2.0px;background:#857d68"></div>
<div class="a" style="left:468.0px;top:229.20px;width:125.2px;height:0.8px;background:#b8b0a0"></div>
<div class="a" style="left:469.9px;top:212.60px;width:6px;height:0.6px;background:#9a9a9a"></div>
<div class="a" style="left:469.9px;top:214.50px;width:2px;height:0.6px;background:#9a9a9a"></div>
<div class="a" style="left:469.9px;top:216.40px;width:4px;height:0.6px;background:#9a9a9a"></div>
<div class="a" style="left:469.9px;top:218.30px;width:2px;height:0.6px;background:#9a9a9a"></div>
<div class="a" style="left:469.9px;top:220.20px;width:6px;height:0.6px;background:#9a9a9a"></div>
<div class="a" style="left:469.9px;top:222.10px;width:2px;height:0.6px;background:#9a9a9a"></div>
<div class="a" style="left:469.9px;top:224.00px;width:4px;height:0.6px;background:#9a9a9a"></div>
<div class="a" style="left:469.9px;top:225.90px;width:2px;height:0.6px;background:#9a9a9a"></div>
<div class="a" style="left:469.9px;top:227.80px;width:6px;height:0.6px;background:#9a9a9a"></div>
<div class="a" style="left:475.2px;top:228.23px;width:5.6px;height:1.07083px;background:#20e020"></div>
<div class="t" style="right:675.6px;top:214.13px;font-size:13px;color:#000;letter-spacing:0.05px">0.002361000</div>
<div class="a" style="left:622px;top:207.10px;width:130.4px;height:24.8px;background:#c4c4e4"></div>
<div class="a" style="left:624.6px;top:209.40px;width:125.2px;height:20.3px;background:#ffffff"></div>
<div class="a" style="left:624.6px;top:209.40px;width:125.2px;height:2.0px;background:#857d68"></div>
<div class="a" style="left:624.6px;top:229.20px;width:125.2px;height:0.8px;background:#b8b0a0"></div>
<div class="a" style="left:626.5px;top:212.60px;width:6px;height:0.6px;background:#9a9a9a"></div>
<div class="a" style="left:626.5px;top:214.50px;width:2px;height:0.6px;background:#9a9a9a"></div>
<div class="a" style="left:626.5px;top:216.40px;width:4px;height:0.6px;background:#9a9a9a"></div>
<div class="a" style="left:626.5px;top:218.30px;width:2px;height:0.6px;background:#9a9a9a"></div>
<div class="a" style="left:626.5px;top:220.20px;width:6px;height:0.6px;background:#9a9a9a"></div>
<div class="a" style="left:626.5px;top:222.10px;width:2px;height:0.6px;background:#9a9a9a"></div>
<div class="a" style="left:626.5px;top:224.00px;width:4px;height:0.6px;background:#9a9a9a"></div>
<div class="a" style="left:626.5px;top:225.90px;width:2px;height:0.6px;background:#9a9a9a"></div>
<div class="a" style="left:626.5px;top:227.80px;width:6px;height:0.6px;background:#9a9a9a"></div>
<div class="t" style="right:519px;top:214.13px;font-size:13px;color:#000;letter-spacing:0.05px">8.755588000</div>
<div class="a" style="left:778.8px;top:207.10px;width:130.4px;height:24.8px;background:#c4c4e4"></div>
<div class="a" style="left:781.4px;top:209.40px;width:125.2px;height:20.3px;background:#ffffff"></div>
<div class="a" style="left:781.4px;top:209.40px;width:125.2px;height:2.0px;background:#857d68"></div>
<div class="a" style="left:781.4px;top:229.20px;width:125.2px;height:0.8px;background:#b8b0a0"></div>
<div class="a" style="left:783.3px;top:212.60px;width:6px;height:0.6px;background:#9a9a9a"></div>
<div class="a" style="left:783.3px;top:214.50px;width:2px;height:0.6px;background:#9a9a9a"></div>
<div class="a" style="left:783.3px;top:216.40px;width:4px;height:0.6px;background:#9a9a9a"></div>
<div class="a" style="left:783.3px;top:218.30px;width:2px;height:0.6px;background:#9a9a9a"></div>
<div class="a" style="left:783.3px;top:220.20px;width:6px;height:0.6px;background:#9a9a9a"></div>
<div class="a" style="left:783.3px;top:222.10px;width:2px;height:0.6px;background:#9a9a9a"></div>
<div class="a" style="left:783.3px;top:224.00px;width:4px;height:0.6px;background:#9a9a9a"></div>
<div class="a" style="left:783.3px;top:225.90px;width:2px;height:0.6px;background:#9a9a9a"></div>
<div class="a" style="left:783.3px;top:227.80px;width:6px;height:0.6px;background:#9a9a9a"></div>
<div class="a" style="left:788.0999999999999px;top:227.30px;width:5.2px;height:2.1px;background:#0000f0"></div>
<div class="t" style="right:362.20000000000005px;top:214.13px;font-size:13px;color:#000;letter-spacing:0.05px">74</div>
<div class="t" style="left:-143.9px;width:400px;text-align:center;top:251.15px;font-size:13.4px;color:#000;letter-spacing:0.0px">11917</div>
<div class="a" style="left:465.4px;top:244.08px;width:130.4px;height:24.8px;background:#c4c4e4"></div>
<div class="a" style="left:468.0px;top:246.38px;width:125.2px;height:20.3px;background:#ffffff"></div>
<div class="a" style="left:468.0px;top:246.38px;width:125.2px;height:2.0px;background:#857d68"></div>
<div class="a" style="left:468.0px;top:266.18px;width:125.2px;height:0.8px;background:#b8b0a0"></div>
<div class="a" style="left:469.9px;top:249.58px;width:6px;height:0.6px;background:#9a9a9a"></div>
<div class="a" style="left:469.9px;top:251.48px;width:2px;height:0.6px;background:#9a9a9a"></div>
<div class="a" style="left:469.9px;top:253.38px;width:4px;height:0.6px;background:#9a9a9a"></div>
<div class="a" style="left:469.9px;top:255.28px;width:2px;height:0.6px;background:#9a9a9a"></div>
<div class="a" style="left:469.9px;top:257.18px;width:6px;height:0.6px;background:#9a9a9a"></div>
<div class="a" style="left:469.9px;top:259.08px;width:2px;height:0.6px;background:#9a9a9a"></div>
<div class="a" style="left:469.9px;top:260.98px;width:4px;height:0.6px;background:#9a9a9a"></div>
<div class="a" style="left:469.9px;top:262.88px;width:2px;height:0.6px;background:#9a9a9a"></div>
<div class="a" style="left:469.9px;top:264.78px;width:6px;height:0.6px;background:#9a9a9a"></div>
<div class="a" style="left:475.2px;top:265.26px;width:5.6px;height:1.02007px;background:#20e020"></div>
<div class="t" style="right:675.6px;top:251.11px;font-size:13px;color:#000;letter-spacing:0.05px">0.000669000</div>
<div class="a" style="left:622px;top:244.08px;width:130.4px;height:24.8px;background:#c4c4e4"></div>
<div class="a" style="left:624.6px;top:246.38px;width:125.2px;height:20.3px;background:#ffffff"></div>
<div class="a" style="left:624.6px;top:246.38px;width:125.2px;height:2.0px;background:#857d68"></div>
<div class="a" style="left:624.6px;top:266.18px;width:125.2px;height:0.8px;background:#b8b0a0"></div>
<div class="a" style="left:626.5px;top:249.58px;width:6px;height:0.6px;background:#9a9a9a"></div>
<div class="a" style="left:626.5px;top:251.48px;width:2px;height:0.6px;background:#9a9a9a"></div>
<div class="a" style="left:626.5px;top:253.38px;width:4px;height:0.6px;background:#9a9a9a"></div>
<div class="a" style="left:626.5px;top:255.28px;width:2px;height:0.6px;background:#9a9a9a"></div>
<div class="a" style="left:626.5px;top:257.18px;width:6px;height:0.6px;background:#9a9a9a"></div>
<div class="a" style="left:626.5px;top:259.08px;width:2px;height:0.6px;background:#9a9a9a"></div>
<div class="a" style="left:626.5px;top:260.98px;width:4px;height:0.6px;background:#9a9a9a"></div>
<div class="a" style="left:626.5px;top:262.88px;width:2px;height:0.6px;background:#9a9a9a"></div>
<div class="a" style="left:626.5px;top:264.78px;width:6px;height:0.6px;background:#9a9a9a"></div>
<div class="t" style="right:519px;top:251.11px;font-size:13px;color:#000;letter-spacing:0.05px">8.756257000</div>
<div class="a" style="left:778.8px;top:244.08px;width:130.4px;height:24.8px;background:#c4c4e4"></div>
<div class="a" style="left:781.4px;top:246.38px;width:125.2px;height:20.3px;background:#ffffff"></div>
<div class="a" style="left:781.4px;top:246.38px;width:125.2px;height:2.0px;background:#857d68"></div>
<div class="a" style="left:781.4px;top:266.18px;width:125.2px;height:0.8px;background:#b8b0a0"></div>
<div class="a" style="left:783.3px;top:249.58px;width:6px;height:0.6px;background:#9a9a9a"></div>
<div class="a" style="left:783.3px;top:251.48px;width:2px;height:0.6px;background:#9a9a9a"></div>
<div class="a" style="left:783.3px;top:253.38px;width:4px;height:0.6px;background:#9a9a9a"></div>
<div class="a" style="left:783.3px;top:255.28px;width:2px;height:0.6px;background:#9a9a9a"></div>
<div class="a" style="left:783.3px;top:257.18px;width:6px;height:0.6px;background:#9a9a9a"></div>
<div class="a" style="left:783.3px;top:259.08px;width:2px;height:0.6px;background:#9a9a9a"></div>
<div class="a" style="left:783.3px;top:260.98px;width:4px;height:0.6px;background:#9a9a9a"></div>
<div class="a" style="left:783.3px;top:262.88px;width:2px;height:0.6px;background:#9a9a9a"></div>
<div class="a" style="left:783.3px;top:264.78px;width:6px;height:0.6px;background:#9a9a9a"></div>
<div class="a" style="left:788.0999999999999px;top:264.28px;width:5.2px;height:2.1px;background:#0000f0"></div>
<div class="t" style="right:362.20000000000005px;top:251.11px;font-size:13px;color:#000;letter-spacing:0.05px">75</div>
<div class="t" style="left:-143.9px;width:400px;text-align:center;top:288.13px;font-size:13.4px;color:#000;letter-spacing:0.0px">11918</div>
<div class="a" style="left:465.4px;top:281.06px;width:130.4px;height:24.8px;background:#c4c4e4"></div>
<div class="a" style="left:468.0px;top:283.36px;width:125.2px;height:20.3px;background:#ffffff"></div>
<div class="a" style="left:468.0px;top:283.36px;width:125.2px;height:2.0px;background:#857d68"></div>
<div class="a" style="left:468.0px;top:303.16px;width:125.2px;height:0.8px;background:#b8b0a0"></div>
<div class="a" style="left:469.9px;top:286.56px;width:6px;height:0.6px;background:#9a9a9a"></div>
<div class="a" style="left:469.9px;top:288.46px;width:2px;height:0.6px;background:#9a9a9a"></div>
<div class="a" style="left:469.9px;top:290.36px;width:4px;height:0.6px;background:#9a9a9a"></div>
<div class="a" style="left:469.9px;top:292.26px;width:2px;height:0.6px;background:#9a9a9a"></div>
<div class="a" style="left:469.9px;top:294.16px;width:6px;height:0.6px;background:#9a9a9a"></div>
<div class="a" style="left:469.9px;top:296.06px;width:2px;height:0.6px;background:#9a9a9a"></div>
<div class="a" style="left:469.9px;top:297.96px;width:4px;height:0.6px;background:#9a9a9a"></div>
<div class="a" style="left:469.9px;top:299.86px;width:2px;height:0.6px;background:#9a9a9a"></div>
<div class="a" style="left:469.9px;top:301.76px;width:6px;height:0.6px;background:#9a9a9a"></div>
<div class="a" style="left:475.2px;top:302.21px;width:5.6px;height:1.0465px;background:#20e020"></div>
<div class="t" style="right:675.6px;top:288.09px;font-size:13px;color:#000;letter-spacing:0.05px">0.001550000</div>
<div class="a" style="left:622px;top:281.06px;width:130.4px;height:24.8px;background:#c4c4e4"></div>
<div class="a" style="left:624.6px;top:283.36px;width:125.2px;height:20.3px;background:#ffffff"></div>
<div class="a" style="left:624.6px;top:283.36px;width:125.2px;height:2.0px;background:#857d68"></div>
<div class="a" style="left:624.6px;top:303.16px;width:125.2px;height:0.8px;background:#b8b0a0"></div>
<div class="a" style="left:626.5px;top:286.56px;width:6px;height:0.6px;background:#9a9a9a"></div>
<div class="a" style="left:626.5px;top:288.46px;width:2px;height:0.6px;background:#9a9a9a"></div>
<div class="a" style="left:626.5px;top:290.36px;width:4px;height:0.6px;background:#9a9a9a"></div>
<div class="a" style="left:626.5px;top:292.26px;width:2px;height:0.6px;background:#9a9a9a"></div>
<div class="a" style="left:626.5px;top:294.16px;width:6px;height:0.6px;background:#9a9a9a"></div>
<div class="a" style="left:626.5px;top:296.06px;width:2px;height:0.6px;background:#9a9a9a"></div>
<div class="a" style="left:626.5px;top:297.96px;width:4px;height:0.6px;background:#9a9a9a"></div>
<div class="a" style="left:626.5px;top:299.86px;width:2px;height:0.6px;background:#9a9a9a"></div>
<div class="a" style="left:626.5px;top:301.76px;width:6px;height:0.6px;background:#9a9a9a"></div>
<div class="t" style="right:519px;top:288.09px;font-size:13px;color:#000;letter-spacing:0.05px">8.757807000</div>
<div class="a" style="left:778.8px;top:281.06px;width:130.4px;height:24.8px;background:#c4c4e4"></div>
<div class="a" style="left:781.4px;top:283.36px;width:125.2px;height:20.3px;background:#ffffff"></div>
<div class="a" style="left:781.4px;top:283.36px;width:125.2px;height:2.0px;background:#857d68"></div>
<div class="a" style="left:781.4px;top:303.16px;width:125.2px;height:0.8px;background:#b8b0a0"></div>
<div class="a" style="left:783.3px;top:286.56px;width:6px;height:0.6px;background:#9a9a9a"></div>
<div class="a" style="left:783.3px;top:288.46px;width:2px;height:0.6px;background:#9a9a9a"></div>
<div class="a" style="left:783.3px;top:290.36px;width:4px;height:0.6px;background:#9a9a9a"></div>
<div class="a" style="left:783.3px;top:292.26px;width:2px;height:0.6px;background:#9a9a9a"></div>
<div class="a" style="left:783.3px;top:294.16px;width:6px;height:0.6px;background:#9a9a9a"></div>
<div class="a" style="left:783.3px;top:296.06px;width:2px;height:0.6px;background:#9a9a9a"></div>
<div class="a" style="left:783.3px;top:297.96px;width:4px;height:0.6px;background:#9a9a9a"></div>
<div class="a" style="left:783.3px;top:299.86px;width:2px;height:0.6px;background:#9a9a9a"></div>
<div class="a" style="left:783.3px;top:301.76px;width:6px;height:0.6px;background:#9a9a9a"></div>
<div class="a" style="left:788.0999999999999px;top:301.26px;width:5.2px;height:2.1px;background:#0000f0"></div>
<div class="t" style="right:362.20000000000005px;top:288.09px;font-size:13px;color:#000;letter-spacing:0.05px">68</div>
<div class="t" style="left:-143.9px;width:400px;text-align:center;top:325.11px;font-size:13.4px;color:#000;letter-spacing:0.0px">11919</div>
<div class="a" style="left:465.4px;top:318.04px;width:130.4px;height:24.8px;background:#c4c4e4"></div>
<div class="a" style="left:468.0px;top:320.34px;width:125.2px;height:20.3px;background:#ffffff"></div>
<div class="a" style="left:468.0px;top:320.34px;width:125.2px;height:2.0px;background:#857d68"></div>
<div class="a" style="left:468.0px;top:340.14px;width:125.2px;height:0.8px;background:#b8b0a0"></div>
<div class="a" style="left:469.9px;top:323.54px;width:6px;height:0.6px;background:#9a9a9a"></div>
<div class="a" style="left:469.9px;top:325.44px;width:2px;height:0.6px;background:#9a9a9a"></div>
<div class="a" style="left:469.9px;top:327.34px;width:4px;height:0.6px;background:#9a9a9a"></div>
<div class="a" style="left:469.9px;top:329.24px;width:2px;height:0.6px;background:#9a9a9a"></div>
<div class="a" style="left:469.9px;top:331.14px;width:6px;height:0.6px;background:#9a9a9a"></div>
<div class="a" style="left:469.9px;top:333.04px;width:2px;height:0.6px;background:#9a9a9a"></div>
<div class="a" style="left:469.9px;top:334.94px;width:4px;height:0.6px;background:#9a9a9a"></div>
<div class="a" style="left:469.9px;top:336.84px;width:2px;height:0.6px;background:#9a9a9a"></div>
<div class="a" style="left:469.9px;top:338.74px;width:6px;height:0.6px;background:#9a9a9a"></div>
<div class="a" style="left:475.2px;top:339.23px;width:5.6px;height:1.01476px;background:#20e020"></div>
<div class="t" style="right:675.6px;top:325.07px;font-size:13px;color:#000;letter-spacing:0.05px">0.000492000</div>
<div class="a" style="left:622px;top:318.04px;width:130.4px;height:24.8px;background:#c4c4e4"></div>
<div class="a" style="left:624.6px;top:320.34px;width:125.2px;height:20.3px;background:#ffffff"></div>
<div class="a" style="left:624.6px;top:320.34px;width:125.2px;height:2.0px;background:#857d68"></div>
<div class="a" style="left:624.6px;top:340.14px;width:125.2px;height:0.8px;background:#b8b0a0"></div>
<div class="a" style="left:626.5px;top:323.54px;width:6px;height:0.6px;background:#9a9a9a"></div>
<div class="a" style="left:626.5px;top:325.44px;width:2px;height:0.6px;background:#9a9a9a"></div>
<div class="a" style="left:626.5px;top:327.34px;width:4px;height:0.6px;background:#9a9a9a"></div>
<div class="a" style="left:626.5px;top:329.24px;width:2px;height:0.6px;background:#9a9a9a"></div>
<div class="a" style="left:626.5px;top:331.14px;width:6px;height:0.6px;background:#9a9a9a"></div>
<div class="a" style="left:626.5px;top:333.04px;width:2px;height:0.6px;background:#9a9a9a"></div>
<div class="a" style="left:626.5px;top:334.94px;width:4px;height:0.6px;background:#9a9a9a"></div>
<div class="a" style="left:626.5px;top:336.84px;width:2px;height:0.6px;background:#9a9a9a"></div>
<div class="a" style="left:626.5px;top:338.74px;width:6px;height:0.6px;background:#9a9a9a"></div>
<div class="t" style="right:519px;top:325.07px;font-size:13px;color:#000;letter-spacing:0.05px">8.758299000</div>
<div class="a" style="left:778.8px;top:318.04px;width:130.4px;height:24.8px;background:#c4c4e4"></div>
<div class="a" style="left:781.4px;top:320.34px;width:125.2px;height:20.3px;background:#ffffff"></div>
<div class="a" style="left:781.4px;top:320.34px;width:125.2px;height:2.0px;background:#857d68"></div>
<div class="a" style="left:781.4px;top:340.14px;width:125.2px;height:0.8px;background:#b8b0a0"></div>
<div class="a" style="left:783.3px;top:323.54px;width:6px;height:0.6px;background:#9a9a9a"></div>
<div class="a" style="left:783.3px;top:325.44px;width:2px;height:0.6px;background:#9a9a9a"></div>
<div class="a" style="left:783.3px;top:327.34px;width:4px;height:0.6px;background:#9a9a9a"></div>
<div class="a" style="left:783.3px;top:329.24px;width:2px;height:0.6px;background:#9a9a9a"></div>
<div class="a" style="left:783.3px;top:331.14px;width:6px;height:0.6px;background:#9a9a9a"></div>
<div class="a" style="left:783.3px;top:333.04px;width:2px;height:0.6px;background:#9a9a9a"></div>
<div class="a" style="left:783.3px;top:334.94px;width:4px;height:0.6px;background:#9a9a9a"></div>
<div class="a" style="left:783.3px;top:336.84px;width:2px;height:0.6px;background:#9a9a9a"></div>
<div class="a" style="left:783.3px;top:338.74px;width:6px;height:0.6px;background:#9a9a9a"></div>
<div class="a" style="left:788.0999999999999px;top:338.24px;width:5.2px;height:2.1px;background:#0000f0"></div>
<div class="t" style="right:362.20000000000005px;top:325.07px;font-size:13px;color:#000;letter-spacing:0.05px">72</div>
<div class="t" style="left:-143.9px;width:400px;text-align:center;top:362.09px;font-size:13.4px;color:#000;letter-spacing:0.0px">11920</div>
<div class="a" style="left:465.4px;top:355.02px;width:130.4px;height:24.8px;background:#c4c4e4"></div>
<div class="a" style="left:468.0px;top:357.32px;width:125.2px;height:20.3px;background:#ffffff"></div>
<div class="a" style="left:468.0px;top:357.32px;width:125.2px;height:2.0px;background:#857d68"></div>
<div class="a" style="left:468.0px;top:377.12px;width:125.2px;height:0.8px;background:#b8b0a0"></div>
<div class="a" style="left:469.9px;top:360.52px;width:6px;height:0.6px;background:#9a9a9a"></div>
<div class="a" style="left:469.9px;top:362.42px;width:2px;height:0.6px;background:#9a9a9a"></div>
<div class="a" style="left:469.9px;top:364.32px;width:4px;height:0.6px;background:#9a9a9a"></div>
<div class="a" style="left:469.9px;top:366.22px;width:2px;height:0.6px;background:#9a9a9a"></div>
<div class="a" style="left:469.9px;top:368.12px;width:6px;height:0.6px;background:#9a9a9a"></div>
<div class="a" style="left:469.9px;top:370.02px;width:2px;height:0.6px;background:#9a9a9a"></div>
<div class="a" style="left:469.9px;top:371.92px;width:4px;height:0.6px;background:#9a9a9a"></div>
<div class="a" style="left:469.9px;top:373.82px;width:2px;height:0.6px;background:#9a9a9a"></div>
<div class="a" style="left:469.9px;top:375.72px;width:6px;height:0.6px;background:#9a9a9a"></div>
<div class="a" style="left:475.2px;top:373.50px;width:5.6px;height:3.71968px;background:#20e020"></div>
<div class="t" style="right:675.6px;top:362.05px;font-size:13px;color:#000;letter-spacing:0.05px">0.090656000</div>
<div class="a" style="left:622px;top:355.02px;width:130.4px;height:24.8px;background:#c4c4e4"></div>
<div class="a" style="left:624.6px;top:357.32px;width:125.2px;height:20.3px;background:#ffffff"></div>
<div class="a" style="left:624.6px;top:357.32px;width:125.2px;height:2.0px;background:#857d68"></div>
<div class="a" style="left:624.6px;top:377.12px;width:125.2px;height:0.8px;background:#b8b0a0"></div>
<div class="a" style="left:626.5px;top:360.52px;width:6px;height:0.6px;background:#9a9a9a"></div>
<div class="a" style="left:626.5px;top:362.42px;width:2px;height:0.6px;background:#9a9a9a"></div>
<div class="a" style="left:626.5px;top:364.32px;width:4px;height:0.6px;background:#9a9a9a"></div>
<div class="a" style="left:626.5px;top:366.22px;width:2px;height:0.6px;background:#9a9a9a"></div>
<div class="a" style="left:626.5px;top:368.12px;width:6px;height:0.6px;background:#9a9a9a"></div>
<div class="a" style="left:626.5px;top:370.02px;width:2px;height:0.6px;background:#9a9a9a"></div>
<div class="a" style="left:626.5px;top:371.92px;width:4px;height:0.6px;background:#9a9a9a"></div>
<div class="a" style="left:626.5px;top:373.82px;width:2px;height:0.6px;background:#9a9a9a"></div>
<div class="a" style="left:626.5px;top:375.72px;width:6px;height:0.6px;background:#9a9a9a"></div>
<div class="t" style="right:519px;top:362.05px;font-size:13px;color:#000;letter-spacing:0.05px">8.848955000</div>
<div class="a" style="left:778.8px;top:355.02px;width:130.4px;height:24.8px;background:#c4c4e4"></div>
<div class="a" style="left:781.4px;top:357.32px;width:125.2px;height:20.3px;background:#ffffff"></div>
<div class="a" style="left:781.4px;top:357.32px;width:125.2px;height:2.0px;background:#857d68"></div>
<div class="a" style="left:781.4px;top:377.12px;width:125.2px;height:0.8px;background:#b8b0a0"></div>
<div class="a" style="left:783.3px;top:360.52px;width:6px;height:0.6px;background:#9a9a9a"></div>
<div class="a" style="left:783.3px;top:362.42px;width:2px;height:0.6px;background:#9a9a9a"></div>
<div class="a" style="left:783.3px;top:364.32px;width:4px;height:0.6px;background:#9a9a9a"></div>
<div class="a" style="left:783.3px;top:366.22px;width:2px;height:0.6px;background:#9a9a9a"></div>
<div class="a" style="left:783.3px;top:368.12px;width:6px;height:0.6px;background:#9a9a9a"></div>
<div class="a" style="left:783.3px;top:370.02px;width:2px;height:0.6px;background:#9a9a9a"></div>
<div class="a" style="left:783.3px;top:371.92px;width:4px;height:0.6px;background:#9a9a9a"></div>
<div class="a" style="left:783.3px;top:373.82px;width:2px;height:0.6px;background:#9a9a9a"></div>
<div class="a" style="left:783.3px;top:375.72px;width:6px;height:0.6px;background:#9a9a9a"></div>
<div class="a" style="left:788.0999999999999px;top:375.22px;width:5.2px;height:2.1px;background:#0000f0"></div>
<div class="t" style="right:362.20000000000005px;top:362.05px;font-size:13px;color:#000;letter-spacing:0.05px">68</div>
<div class="t" style="left:-143.9px;width:400px;text-align:center;top:399.07px;font-size:13.4px;color:#000;letter-spacing:0.0px">11921</div>
<div class="a" style="left:465.4px;top:392.00px;width:130.4px;height:24.8px;background:#c4c4e4"></div>
<div class="a" style="left:468.0px;top:394.30px;width:125.2px;height:20.3px;background:#ffffff"></div>
<div class="a" style="left:468.0px;top:394.30px;width:125.2px;height:2.0px;background:#857d68"></div>
<div class="a" style="left:468.0px;top:414.10px;width:125.2px;height:0.8px;background:#b8b0a0"></div>
<div class="a" style="left:469.9px;top:397.50px;width:6px;height:0.6px;background:#9a9a9a"></div>
<div class="a" style="left:469.9px;top:399.40px;width:2px;height:0.6px;background:#9a9a9a"></div>
<div class="a" style="left:469.9px;top:401.30px;width:4px;height:0.6px;background:#9a9a9a"></div>
<div class="a" style="left:469.9px;top:403.20px;width:2px;height:0.6px;background:#9a9a9a"></div>
<div class="a" style="left:469.9px;top:405.10px;width:6px;height:0.6px;background:#9a9a9a"></div>
<div class="a" style="left:469.9px;top:407.00px;width:2px;height:0.6px;background:#9a9a9a"></div>
<div class="a" style="left:469.9px;top:408.90px;width:4px;height:0.6px;background:#9a9a9a"></div>
<div class="a" style="left:469.9px;top:410.80px;width:2px;height:0.6px;background:#9a9a9a"></div>
<div class="a" style="left:469.9px;top:412.70px;width:6px;height:0.6px;background:#9a9a9a"></div>
<div class="a" style="left:475.2px;top:413.20px;width:5.6px;height:1.00471px;background:#20e020"></div>
<div class="t" style="right:675.6px;top:399.03px;font-size:13px;color:#000;letter-spacing:0.05px">0.000157000</div>
<div class="a" style="left:622px;top:392.00px;width:130.4px;height:24.8px;background:#c4c4e4"></div>
<div class="a" style="left:624.6px;top:394.30px;width:125.2px;height:20.3px;background:#ffffff"></div>
<div class="a" style="left:624.6px;top:394.30px;width:125.2px;height:2.0px;background:#857d68"></div>
<div class="a" style="left:624.6px;top:414.10px;width:125.2px;height:0.8px;background:#b8b0a0"></div>
<div class="a" style="left:626.5px;top:397.50px;width:6px;height:0.6px;background:#9a9a9a"></div>
<div class="a" style="left:626.5px;top:399.40px;width:2px;height:0.6px;background:#9a9a9a"></div>
<div class="a" style="left:626.5px;top:401.30px;width:4px;height:0.6px;background:#9a9a9a"></div>
<div class="a" style="left:626.5px;top:403.20px;width:2px;height:0.6px;background:#9a9a9a"></div>
<div class="a" style="left:626.5px;top:405.10px;width:6px;height:0.6px;background:#9a9a9a"></div>
<div class="a" style="left:626.5px;top:407.00px;width:2px;height:0.6px;background:#9a9a9a"></div>
<div class="a" style="left:626.5px;top:408.90px;width:4px;height:0.6px;background:#9a9a9a"></div>
<div class="a" style="left:626.5px;top:410.80px;width:2px;height:0.6px;background:#9a9a9a"></div>
<div class="a" style="left:626.5px;top:412.70px;width:6px;height:0.6px;background:#9a9a9a"></div>
<div class="t" style="right:519px;top:399.03px;font-size:13px;color:#000;letter-spacing:0.05px">8.849112000</div>
<div class="a" style="left:778.8px;top:392.00px;width:130.4px;height:24.8px;background:#c4c4e4"></div>
<div class="a" style="left:781.4px;top:394.30px;width:125.2px;height:20.3px;background:#ffffff"></div>
<div class="a" style="left:781.4px;top:394.30px;width:125.2px;height:2.0px;background:#857d68"></div>
<div class="a" style="left:781.4px;top:414.10px;width:125.2px;height:0.8px;background:#b8b0a0"></div>
<div class="a" style="left:783.3px;top:397.50px;width:6px;height:0.6px;background:#9a9a9a"></div>
<div class="a" style="left:783.3px;top:399.40px;width:2px;height:0.6px;background:#9a9a9a"></div>
<div class="a" style="left:783.3px;top:401.30px;width:4px;height:0.6px;background:#9a9a9a"></div>
<div class="a" style="left:783.3px;top:403.20px;width:2px;height:0.6px;background:#9a9a9a"></div>
<div class="a" style="left:783.3px;top:405.10px;width:6px;height:0.6px;background:#9a9a9a"></div>
<div class="a" style="left:783.3px;top:407.00px;width:2px;height:0.6px;background:#9a9a9a"></div>
<div class="a" style="left:783.3px;top:408.90px;width:4px;height:0.6px;background:#9a9a9a"></div>
<div class="a" style="left:783.3px;top:410.80px;width:2px;height:0.6px;background:#9a9a9a"></div>
<div class="a" style="left:783.3px;top:412.70px;width:6px;height:0.6px;background:#9a9a9a"></div>
<div class="a" style="left:788.0999999999999px;top:412.20px;width:5.2px;height:2.1px;background:#0000f0"></div>
<div class="t" style="right:362.20000000000005px;top:399.03px;font-size:13px;color:#000;letter-spacing:0.05px">68</div>
<svg class="a" style="left:0;top:0" width="1267" height="420"><line x1="433.1" y1="-6.38" x2="116.5" y2="3.12" stroke="#1a1a1a" stroke-width="1.4"/><polygon points="125.1,3.12 137.5,-4.48 137.5,10.12" fill="#f8c000" stroke="#202020" stroke-width="1"/><use href="#pc" x="425.3" y="-17.48" width="15" height="16"/><use href="#pc" x="108.7" y="-4.98" width="15" height="16"/><line x1="433.1" y1="30.60" x2="116.5" y2="40.10" stroke="#1a1a1a" stroke-width="1.4"/><polygon points="125.1,40.10 137.5,32.50 137.5,47.10" fill="#f8c000" stroke="#202020" stroke-width="1"/><use href="#pc" x="425.3" y="19.50" width="15" height="16"/><use href="#pc" x="108.7" y="32.00" width="15" height="16"/><line x1="116.5" y1="67.58" x2="433.1" y2="77.08" stroke="#1a1a1a" stroke-width="1.4"/><polygon points="425.0,77.08 412.0,69.48 412.0,84.58" fill="#f8c000" stroke="#202020" stroke-width="1"/><use href="#pc" x="108.7" y="56.48" width="15" height="16"/><use href="#pc" x="425.3" y="68.98" width="15" height="16"/><line x1="433.1" y1="104.56" x2="116.5" y2="114.06" stroke="#1a1a1a" stroke-width="1.4"/><polygon points="125.1,114.06 137.5,106.46 137.5,121.06" fill="#f8c000" stroke="#202020" stroke-width="1"/><use href="#pc" x="425.3" y="93.46" width="15" height="16"/><use href="#pc" x="108.7" y="105.96" width="15" height="16"/><line x1="433.1" y1="141.54" x2="116.5" y2="151.04" stroke="#1a1a1a" stroke-width="1.4"/><polygon points="125.1,151.04 137.5,143.44 137.5,158.04" fill="#f8c000" stroke="#202020" stroke-width="1"/><use href="#pc" x="425.3" y="130.44" width="15" height="16"/><use href="#pc" x="108.7" y="142.94" width="15" height="16"/><line x1="116.5" y1="178.52" x2="433.1" y2="188.02" stroke="#1a1a1a" stroke-width="1.4"/><polygon points="425.0,188.02 412.0,180.42 412.0,195.52" fill="#f8c000" stroke="#202020" stroke-width="1"/><use href="#pc" x="108.7" y="167.42" width="15" height="16"/><use href="#pc" x="425.3" y="179.92" width="15" height="16"/><line x1="116.5" y1="215.50" x2="433.1" y2="225.00" stroke="#1a1a1a" stroke-width="1.4"/><polygon points="425.0,225.00 412.0,217.40 412.0,232.50" fill="#f8c000" stroke="#202020" stroke-width="1"/><use href="#pc" x="108.7" y="204.40" width="15" height="16"/><use href="#pc" x="425.3" y="216.90" width="15" height="16"/><line x1="433.1" y1="252.48" x2="116.5" y2="261.98" stroke="#1a1a1a" stroke-width="1.4"/><polygon points="125.1,261.98 137.5,254.38 137.5,268.98" fill="#f8c000" stroke="#202020" stroke-width="1"/><use href="#pc" x="425.3" y="241.38" width="15" height="16"/><use href="#pc" x="108.7" y="253.88" width="15" height="16"/><line x1="116.5" y1="289.46" x2="433.1" y2="298.96" stroke="#1a1a1a" stroke-width="1.4"/><polygon points="425.0,298.96 412.0,291.36 412.0,306.46" fill="#f8c000" stroke="#202020" stroke-width="1"/><use href="#pc" x="108.7" y="278.36" width="15" height="16"/><use href="#pc" x="425.3" y="290.86" width="15" height="16"/><line x1="433.1" y1="326.44" x2="116.5" y2="335.94" stroke="#1a1a1a" stroke-width="1.4"/><polygon points="125.1,335.94 137.5,328.34 137.5,342.94" fill="#f8c000" stroke="#202020" stroke-width="1"/><use href="#pc" x="425.3" y="315.34" width="15" height="16"/><use href="#pc" x="108.7" y="327.84" width="15" height="16"/><line x1="116.5" y1="363.42" x2="433.1" y2="372.92" stroke="#1a1a1a" stroke-width="1.4"/><polygon points="425.0,372.92 412.0,365.32 412.0,380.42" fill="#f8c000" stroke="#202020" stroke-width="1"/><use href="#pc" x="108.7" y="352.32" width="15" height="16"/><use href="#pc" x="425.3" y="364.82" width="15" height="16"/><line x1="116.5" y1="400.40" x2="433.1" y2="409.90" stroke="#1a1a1a" stroke-width="1.4"/><polygon points="425.0,409.90 412.0,402.30 412.0,417.40" fill="#f8c000" stroke="#202020" stroke-width="1"/><use href="#pc" x="108.7" y="389.30" width="15" height="16"/><use href="#pc" x="425.3" y="401.80" width="15" height="16"/></svg>
<div class="a" style="left:216.40px;top:-9.88px;width:115.2px;height:16px;background:#0000ff;overflow:hidden"><div class="t" style="left:-50px;width:215.2px;text-align:center;top:1.3px;font-size:13.6px;color:#ffffff;letter-spacing:0.05px;-webkit-text-stroke:0">h-&gt;c stop accepted</div></div>
<div class="a" style="left:191.90px;top:27.10px;width:164.2px;height:16px;background:#0000ff;overflow:hidden"><div class="t" style="left:-50px;width:264.2px;text-align:center;top:1.3px;font-size:13.6px;color:#ffffff;letter-spacing:0.05px;-webkit-text-stroke:0">client-&gt;host connect packet</div></div>
<div class="a" style="left:209.40px;top:64.08px;width:129.2px;height:16px;background:#0000ff;overflow:hidden"><div class="t" style="left:-50px;width:229.2px;text-align:center;top:1.3px;font-size:13.6px;color:#ffffff;letter-spacing:0.05px;-webkit-text-stroke:0">keyboard data (short)</div></div>
<div class="a" style="left:245.40px;top:101.06px;width:57.2px;height:16px;background:#0000ff;overflow:hidden"><div class="t" style="left:-50px;width:157.2px;text-align:center;top:1.3px;font-size:13.6px;color:#ffffff;letter-spacing:0.05px;-webkit-text-stroke:0">Maximum</div></div>
<div class="a" style="left:177.70px;top:138.04px;width:192.6px;height:16px;background:#0000ff;overflow:hidden"><div class="t" style="left:-50px;width:292.6px;text-align:center;top:1.3px;font-size:13.6px;color:#ffffff;letter-spacing:0.05px;-webkit-text-stroke:0">c-&gt;h start sending and redisplay</div></div>
<div class="a" style="left:220.70px;top:175.02px;width:106.6px;height:16px;background:#0000ff;overflow:hidden"><div class="t" style="left:-50px;width:206.6px;text-align:center;top:1.3px;font-size:13.6px;color:#ffffff;letter-spacing:0.05px;-webkit-text-stroke:0">terminate request</div></div>
<div class="a" style="left:209.40px;top:212.00px;width:129.2px;height:16px;background:#0000ff;overflow:hidden"><div class="t" style="left:-50px;width:229.2px;text-align:center;top:1.3px;font-size:13.6px;color:#ffffff;letter-spacing:0.05px;-webkit-text-stroke:0">keyboard data (short)</div></div>
<div class="a" style="left:212.10px;top:248.98px;width:123.8px;height:16px;background:#0000ff;overflow:hidden"><div class="t" style="left:-50px;width:223.8px;text-align:center;top:1.3px;font-size:13.6px;color:#ffffff;letter-spacing:0.05px;-webkit-text-stroke:0">keyboard data (long)</div></div>
<div class="a" style="left:191.90px;top:285.96px;width:164.2px;height:16px;background:#0000ff;overflow:hidden"><div class="t" style="left:-50px;width:264.2px;text-align:center;top:1.3px;font-size:13.6px;color:#ffffff;letter-spacing:0.05px;-webkit-text-stroke:0">client-&gt;host connect packet</div></div>
<div class="a" style="left:191.90px;top:322.94px;width:164.2px;height:16px;background:#0000ff;overflow:hidden"><div class="t" style="left:-50px;width:264.2px;text-align:center;top:1.3px;font-size:13.6px;color:#ffffff;letter-spacing:0.05px;-webkit-text-stroke:0">client-&gt;host connect packet</div></div>
<div class="a" style="left:176.5px;top:317.64px;width:203.3px;height:27.3px;background:rgb(255,250,80);mix-blend-mode:multiply"></div>
<div class="a" style="left:249.50px;top:359.92px;width:49px;height:16px;background:#0000ff;overflow:hidden"><div class="t" style="left:-50px;width:149px;text-align:center;top:1.3px;font-size:13.6px;color:#ffffff;letter-spacing:0.05px;-webkit-text-stroke:0">FIN/ACK</div></div>
<div class="a" style="left:255.20px;top:396.90px;width:37.6px;height:16px;background:#0000ff;overflow:hidden"><div class="t" style="left:-50px;width:137.6px;text-align:center;top:1.3px;font-size:13.6px;color:#ffffff;letter-spacing:0.05px;-webkit-text-stroke:0">RST...</div></div>
<svg class="a" style="left:205px;top:348.72px" width="135" height="45"><ellipse cx="67" cy="23" rx="55.5" ry="15.5" fill="none" stroke="#909090" stroke-opacity="0.5" stroke-width="4" transform="translate(2,2)"/><ellipse cx="66" cy="22" rx="55.5" ry="15.8" fill="none" stroke="#b9503a" stroke-width="3.6"/></svg>
</div>
<div class="a" style="left:140px;top:281px;width:273px;height:22.5px;overflow:hidden;background:#dcdcdc">
<div class="a" style="left:-10px;top:-10px;width:293px;height:42px;filter:blur(4px);background:
linear-gradient(90deg,#d2d2d2 0px,#c6c6c6 30px,#c8c8c8 80px,#d8d8da 110px,#e2e2e6 150px,#e0e0e4 200px,#d0d0d2 240px,#cfcfcf 275px,#dedede 293px)"></div>
<div class="a" style="left:80px;top:16px;width:110px;height:14px;filter:blur(5px);background:#a8a8f0;opacity:0.8"></div>
<div class="a" style="left:-10px;top:-6px;width:293px;height:8px;filter:blur(3px);background:#e8e8e8;opacity:0.6"></div>
</div>
</body></html>
